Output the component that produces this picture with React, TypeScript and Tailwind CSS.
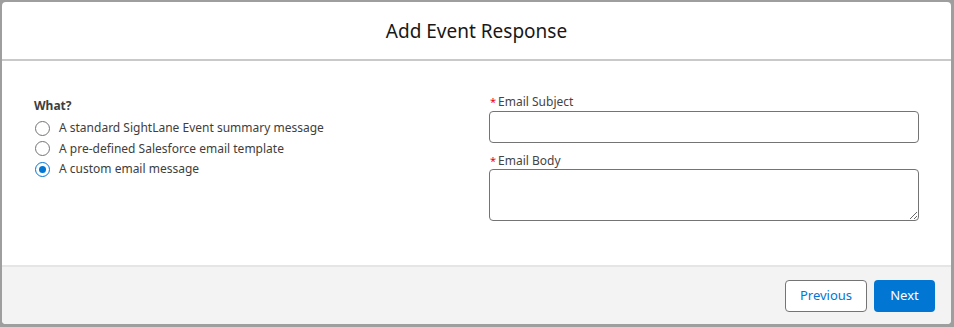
import React from "react";

function Radio({ checked }: { checked?: boolean }) {
  return checked ? (
    <span className="flex h-[15px] w-[15px] items-center justify-center rounded-full border border-[#0176d3] bg-white">
      <span className="h-[7px] w-[7px] rounded-full bg-[#0176d3]" />
    </span>
  ) : (
    <span className="h-[15px] w-[15px] rounded-full border border-[#747474] bg-white" />
  );
}

export default function App() {
  const font = { fontFamily: '"Noto Sans", "Open Sans", Arial, sans-serif' };
  return (
    <div
      className="h-[327px] w-[954px] bg-[#9e9e9e] pb-[3px] pl-[2px] pr-[3px] pt-[2px]"
      style={font}
    >
      <div className="flex h-full flex-col overflow-hidden rounded-[4px] bg-white">
        <div className="flex h-[59px] shrink-0 items-center justify-center border-b-2 border-[#c9c9c9] pt-[2px]">
          <h1 className="text-[19px] font-normal text-[#181818]">Add Event Response</h1>
        </div>
        <div className="grid flex-1 grid-cols-[455px_430px] px-[32px] pt-[33px]">
          <div className="pt-[3px]">
            <div className="text-[12px] font-bold leading-[18px] text-[#3e3e3c]">What?</div>
            <div className="mt-[3px] flex flex-col">
              {[
                ["A standard SightLane Event summary message", false],
                ["A pre-defined Salesforce email template", false],
                ["A custom email message", true],
              ].map(([label, checked]) => (
                <label
                  key={label as string}
                  className="flex h-[20.5px] items-center gap-[9px] pl-[1px] text-[12px] text-[#3e3e3c]"
                >
                  <Radio checked={checked as boolean} />
                  <span>{label as string}</span>
                </label>
              ))}
            </div>
          </div>
          <div className="flex flex-col">
            <div className="flex items-center pl-[1px] text-[12px] leading-[16px] text-[#444444]">
              <span className="mr-[2px] text-[11px] text-[#ea001e]">*</span>Email Subject
            </div>
            <input
              className="mt-[1px] h-[32px] w-full rounded-[4px] border border-[#747474] bg-white outline-none"
              type="text"
            />
            <div className="mt-[10px] flex items-center pl-[1px] text-[12px] leading-[16px] text-[#444444]">
              <span className="mr-[2px] text-[11px] text-[#ea001e]">*</span>Email Body
            </div>
            <textarea className="h-[52px] w-full resize-y rounded-[4px] border border-[#747474] bg-white outline-none" />
          </div>
        </div>
        <div className="flex h-[59px] shrink-0 items-center justify-end gap-[7px] border-t-2 border-[#e5e5e5] bg-[#f3f3f3] pr-[16px]">
          <button className="h-[32px] w-[82px] rounded-[4px] border border-[#747474] bg-white text-[13px] text-[#0176d3]">
            Previous
          </button>
          <button className="h-[32px] w-[61px] rounded-[4px] bg-[#0176d3] text-[13px] text-white">
            Next
          </button>
        </div>
      </div>
    </div>
  );
}
